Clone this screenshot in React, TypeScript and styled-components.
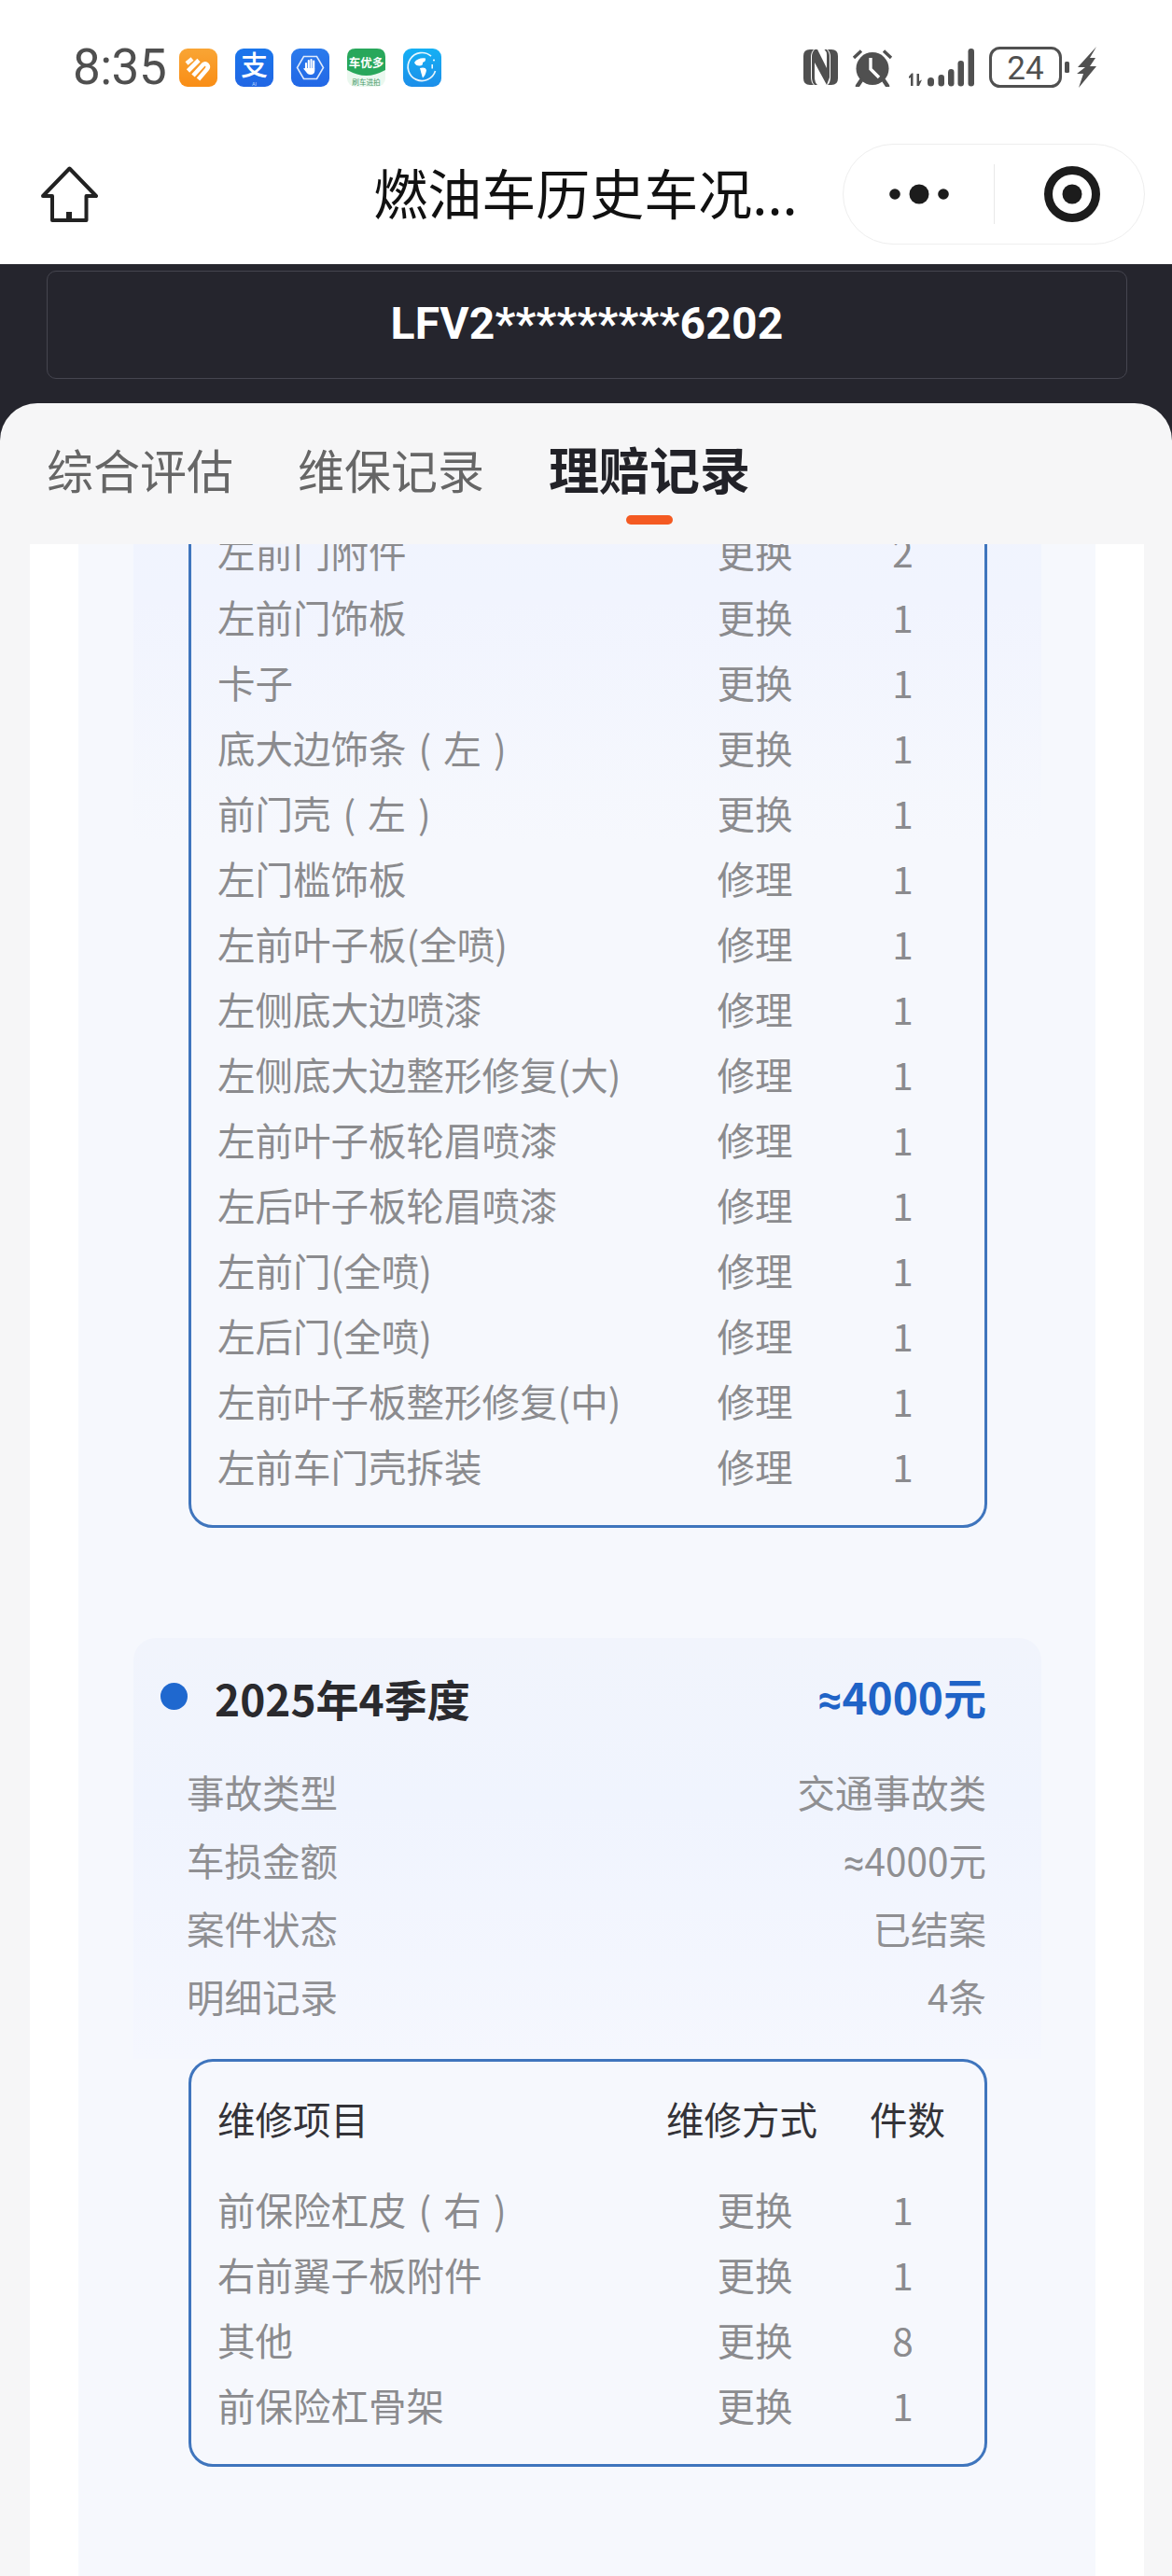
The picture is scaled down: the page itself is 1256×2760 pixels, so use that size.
import React from "react";
import styled, { createGlobalStyle } from "styled-components";

const Global = createGlobalStyle`
  html, body { margin: 0; padding: 0; background: #fff; }
  * { box-sizing: border-box; }
`;

const CJK = `"Noto Sans CJK SC", "Noto Sans", sans-serif`;

const Page = styled.div`
  width: 1256px;
  height: 2760px;
  overflow: hidden;
  background: #fff;
  display: flex;
  flex-direction: column;
  font-family: ${CJK};
`;

const StatusBar = styled.div`
  height: 140px;
  flex: none;
  padding: 50px 81px 0 78px;
  display: flex;
  justify-content: space-between;
  align-items: flex-start;
`;
const StatusLeft = styled.div`
  display: flex;
  align-items: center;
  height: 44px;
`;
const Time = styled.span`
  font-family: Roboto, sans-serif;
  font-size: 53px;
  line-height: 44px;
  letter-spacing: -0.5px;
  color: #4f4f4f;
  width: 114px;
`;
const AppIcons = styled.div`
  display: flex;
  gap: 19px;
`;
const StatusRight = styled.div`
  display: flex;
  align-items: center;
  height: 44px;
  gap: 15px;
`;

const NavBar = styled.div`
  height: 143px;
  flex: none;
  display: grid;
  grid-template-columns: 1fr auto 1fr;
  align-items: center;
  padding: 0 29px 8px 44px;
`;
const Title = styled.h1`
  margin: 0 16px 0 0;
  padding-bottom: 6px;
  font-size: 58px;
  font-weight: 400;
  line-height: 70px;
  color: #111;
  white-space: nowrap;
`;
const Capsule = styled.div`
  justify-self: end;
  width: 324px;
  height: 108px;
  border: 1.5px solid #eeeeee;
  border-radius: 54px;
  background: #fff;
  display: grid;
  grid-template-columns: 161px 1px 1fr;
  align-items: center;
  justify-items: center;
`;
const CapsuleDivider = styled.div`
  width: 1.5px;
  height: 64px;
  background: #e8e8e8;
`;
const TargetWrap = styled.div`
  display: flex;
  margin-left: 5px;
`;

const Hero = styled.div`
  flex: none;
  height: 149px;
  padding: 7px 48px 26px 50px;
  background: #25252d;
`;
const VinBox = styled.div`
  height: 116px;
  padding-bottom: 3px;
  border: 1.5px solid #45454f;
  border-radius: 10px;
  display: flex;
  align-items: center;
  justify-content: center;
  color: #fff;
  font-family: Roboto, sans-serif;
  font-weight: 700;
  font-size: 48px;
  letter-spacing: 0.2px;
`;

const HeroBackdrop = styled.div`
  flex: 1;
  min-height: 0;
  background: #25252d;
  display: flex;
  flex-direction: column;
`;
const Sheet = styled.div`
  flex: 1;
  min-height: 0;
  background: #f6f6f7;
  border-radius: 40px 40px 0 0;
  display: flex;
  flex-direction: column;
`;
const Tabs = styled.div`
  flex: none;
  height: 151px;
  padding: 40px 0 0 50px;
  display: flex;
  gap: 69px;
`;
const Tab = styled.div<{ $active?: boolean }>`
  display: flex;
  flex-direction: column;
  align-items: center;
  font-size: ${(p) => (p.$active ? 54 : 50)}px;
  font-weight: ${(p) => (p.$active ? 700 : 400)};
  line-height: 60px;
  color: ${(p) => (p.$active ? "#222228" : "#666")};
`;
const TabBar = styled.div`
  width: 50px;
  height: 10px;
  margin-top: 20px;
  border-radius: 5px;
  background: #f45a22;
`;

const Viewport = styled.div`
  flex: 1;
  min-height: 0;
  overflow: hidden;
  padding: 0 30px 0 32px;
  display: flex;
`;
const WhiteCard = styled.div`
  flex: 1;
  min-width: 0;
  background: #fff;
  padding: 0 52px;
  display: flex;
`;
const PaleCard = styled.div`
  flex: 1;
  min-width: 0;
  background: #f6f8fd;
  padding: 0 58px 0 59px;
`;
const ScrollContent = styled.div`
  margin-top: -59px;
`;
const Section = styled.section<{ $fade?: boolean }>`
  background: ${(p) =>
    p.$fade ? "linear-gradient(#f0f4fe 0, #f1f4fe 120px, #f6f8fd 380px)" : "transparent"};
  & + & {
    margin-top: 118px;
  }
`;
const Summary = styled.div`
  height: 451px;
  padding: 38px 59px 0 57px;
  border-radius: 24px 24px 0 0;
  background: linear-gradient(#f1f4fc 0, #f0f4fe 40%, #f5f7fe 100%);
`;
const SummaryHead = styled.div`
  height: 58px;
  padding-bottom: 6px;
  margin: 0 0 35px -28px;
  display: flex;
  align-items: center;
`;
const Dot = styled.span`
  width: 29px;
  height: 29px;
  margin: 0 29px 4px 0;
  border-radius: 50%;
  background: #1f68cf;
  flex: none;
`;
const Quarter = styled.h2`
  margin: 0;
  flex: 1;
  font-size: 46px;
  font-weight: 700;
  line-height: 58px;
  color: #2a2a2e;
`;
const Amount = styled.span`
  font-size: 46px;
  font-weight: 700;
  line-height: 58px;
  color: #1f63c7;
`;
const Approx = styled.span`
  font-family: Roboto, sans-serif;
`;
const InfoRow = styled.div`
  height: 73px;
  padding-bottom: 6px;
  display: flex;
  justify-content: space-between;
  align-items: center;
  font-size: 40.5px;
  color: #8f8f92;
`;

const Table = styled.div`
  margin: 0 58px 0 59px;
  padding: 31px 42px 26px 28px;
  border: 3px solid #3f75bd;
  border-radius: 26px;
`;
const Row = styled.div<{ $head?: boolean }>`
  height: ${(p) => (p.$head ? 60 : 70)}px;
  padding-bottom: 6px;
  margin-bottom: ${(p) => (p.$head ? 34 : 0)}px;
  display: grid;
  grid-template-columns: minmax(0, 1fr) 162px 81px;
  column-gap: 56px;
  align-items: center;
  font-size: 40.5px;
  white-space: nowrap;
  color: ${(p) => (p.$head ? "#333338" : "#8b8b8e")};
`;
const ItemName = styled.span`
  word-spacing: 4px;
`;
const Method = styled.span<{ $head?: boolean }>`
  text-align: center;
  padding-left: ${(p) => (p.$head ? 0 : 28)}px;
`;
const Count = styled.span<{ $head?: boolean }>`
  text-align: center;
  padding-right: ${(p) => (p.$head ? 0 : 10)}px;
`;

/* Icons */
const HomeIcon = () => (
  <svg width="61" height="60" viewBox="0 0 61 60" fill="none" stroke="#222" strokeWidth="4" strokeLinejoin="round">
    <path d="M30.5 2.5 L59 32 H48.5 V58 H12 V32 H2 Z" />
    <path d="M30 58 V49" strokeWidth="6" />
  </svg>
);
const HeartApp = () => (
  <svg width="41" height="41" viewBox="0 0 41 41">
    <defs>
      <linearGradient id="or" x1="0" y1="0" x2="0" y2="1">
        <stop offset="0" stopColor="#f9a535" />
        <stop offset="1" stopColor="#f98d15" />
      </linearGradient>
    </defs>
    <rect width="41" height="41" rx="9" fill="url(#or)" />
    <g fill="none" stroke="#fff" strokeWidth="4.6" strokeLinecap="butt">
      <path d="M8 16 L14 11" opacity=".95" />
      <path d="M9.5 24 L21 12.5" />
      <path d="M15 29 L25.5 17.5 Q28 15 30 17.5 Q32 20 29.5 22.5 L20.5 33" />
    </g>
  </svg>
);
const AlipayApp = () => (
  <svg width="41" height="41" viewBox="0 0 41 41">
    <defs>
      <linearGradient id="bl" x1="0" y1="0" x2="0" y2="1">
        <stop offset="0" stopColor="#1a76ec" />
        <stop offset="1" stopColor="#2166e4" />
      </linearGradient>
    </defs>
    <rect width="41" height="41" rx="9" fill="url(#bl)" />
    <text x="20.5" y="29" textAnchor="middle" fontSize="29" fontWeight="500" fill="#fff" fontFamily={CJK}>支</text>
    <text x="20.5" y="39.5" textAnchor="middle" fontSize="5.5" fill="#bcd8ff" fontFamily="Roboto, sans-serif">AI</text>
  </svg>
);
const HandApp = () => (
  <svg width="41" height="41" viewBox="0 0 41 41">
    <defs>
      <linearGradient id="hb" x1="0" y1="0" x2="0" y2="1">
        <stop offset="0" stopColor="#2b7bec" />
        <stop offset="1" stopColor="#2267e6" />
      </linearGradient>
    </defs>
    <rect width="41" height="41" rx="9" fill="url(#hb)" />
    <path d="M13.5 8.5 H27.5 L34.5 20.5 L27.5 32.5 H13.5 L6.5 20.5 Z" fill="none" stroke="#fff" strokeWidth="1.6" opacity=".85" />
    <path d="M16 16 V22 M18.8 13 V21 M21.5 12 V21 M24.2 13.5 V21" stroke="#fff" strokeWidth="2.1" strokeLinecap="round" />
    <path d="M14.9 21 H25.3 V24 Q25 28 20.8 28 Q17.6 28 16 25 L13 21.5 Z" fill="#fff" />
  </svg>
);
const CarApp = () => (
  <svg width="41" height="41" viewBox="0 0 41 41">
    <rect width="41" height="41" rx="9" fill="#eaf8ef" />
    <path d="M9 0 H32 Q41 0 41 9 V23 Q30 29 20.5 29 Q11 29 0 23 V9 Q0 0 9 0 Z" fill="#28a75b" />
    <text x="20.5" y="20" textAnchor="middle" fontSize="12.5" fontWeight="700" fill="#fff" fontFamily={CJK}>车优多</text>
    <text x="20.5" y="39" textAnchor="middle" fontSize="7.6" fill="#4b9a6a" fontFamily={CJK}>刷车进拍</text>
  </svg>
);
const GlobeApp = () => (
  <svg width="41" height="41" viewBox="0 0 41 41">
    <defs>
      <linearGradient id="gb" x1="0" y1="0" x2="0" y2="1">
        <stop offset="0" stopColor="#15b0f4" />
        <stop offset="1" stopColor="#1c8ee9" />
      </linearGradient>
    </defs>
    <rect width="41" height="41" rx="9" fill="url(#gb)" />
    <path d="M30 8.2 A15 15 0 1 0 34.5 24" fill="none" stroke="#fff" strokeWidth="1.7" opacity=".9" />
    <path d="M12 15 Q16 9.5 24 10.5 Q24.5 14 21 15 Q21.5 18.5 17.5 18.5 Q13.5 18.5 12 15 Z" fill="#fff" />
    <path d="M18 21 Q24 19.5 25 23 Q24.5 28 21 31.5 Q19.5 27 18 21 Z" fill="#fff" />
    <path d="M31.2 17 V21.5" stroke="#fff" strokeWidth="1.5" />
    <circle cx="33" cy="12.5" r="1" fill="#fff" />
  </svg>
);
const gray = "#505050";
const NfcIcon = () => (
  <svg width="37" height="38" viewBox="0 0 37 38">
    <path d="M7 0 H11 Q8 3 8 8 V30 Q8 35 11 38 H7 Q0 38 0 31 V7 Q0 0 7 0 Z" fill={gray} />
    <path d="M26 0 H30 Q37 0 37 7 V31 Q37 38 30 38 H26 Q29 35 29 30 V8 Q29 3 26 0 Z" fill={gray} />
    <path d="M12 0 H15 L25 20 V6 Q25 2 22.5 0 H25 Q28 3 28 8 V30 L25 38 L12 14 V30 Q12 35 15 38 H12 Q9 35 9 30 V8 Q9 3 12 0 Z" fill={gray} />
  </svg>
);
const AlarmIcon = () => (
  <svg width="44" height="42" viewBox="0 0 44 42">
    <circle cx="22" cy="22.5" r="17.5" fill={gray} />
    <path d="M2 11 L10 3.5 M42 11 L34 3.5" stroke={gray} strokeWidth="3.4" />
    <path d="M10 35 L6 41 M34 35 L38 41" stroke={gray} strokeWidth="4.4" strokeLinecap="round" />
    <path d="M20 11 V23 L29 32" fill="none" stroke="#fff" strokeWidth="3.4" />
  </svg>
);
const SignalIcon = () => (
  <svg width="73" height="44" viewBox="0 0 73 44">
    <g fill={gray}>
      <path d="M5 28.5 L2 32 V34 L4 33 V42 H6.5 V28.5 Z" />
      <path d="M10.5 29 H13 V37 L16 35.5 L13 42 H10.5 Z" />
      <rect x="22" y="33" width="7" height="9.5" rx="3.5" />
      <rect x="33.5" y="30" width="6.5" height="12.5" rx="3.2" />
      <rect x="44" y="24" width="6.5" height="18.5" rx="3.2" />
      <rect x="54.5" y="15" width="6.5" height="27.5" rx="3.2" />
      <rect x="65.5" y="2" width="6.5" height="40.5" rx="3.2" />
    </g>
  </svg>
);
const BatteryIcon = () => (
  <svg width="115" height="44" viewBox="0 0 115 44">
    <rect x="1.5" y="1.5" width="75" height="41" rx="10" fill="none" stroke={gray} strokeWidth="3" />
    <text x="39" y="35" textAnchor="middle" fontFamily="Roboto, sans-serif" fontSize="35" fill={gray}>24</text>
    <rect x="81" y="16" width="5" height="12" rx="1.5" fill={gray} />
    <path d="M115 0 L95 22 H103 L94 29 H101 L96 44 L115 21 H108 L114 12 H108 Z" fill={gray} />
  </svg>
);
const DotsIcon = () => (
  <svg width="64" height="24" viewBox="0 0 64 24" fill="#1c1c1c">
    <circle cx="6" cy="12" r="5.8" />
    <circle cx="32" cy="12" r="10.5" />
    <circle cx="58" cy="12" r="5.8" />
  </svg>
);
const TargetIcon = () => (
  <svg width="62" height="62" viewBox="0 0 62 62">
    <circle cx="31" cy="31" r="25.5" fill="none" stroke="#1c1c1c" strokeWidth="9" />
    <circle cx="31" cy="31" r="10.5" fill="#1c1c1c" />
  </svg>
);

type Item = [string, string, string];
const first: Item[] = [
  ["左前门附件", "更换", "2"],
  ["左前门饰板", "更换", "1"],
  ["卡子", "更换", "1"],
  ["底大边饰条 ( 左 )", "更换", "1"],
  ["前门壳 ( 左 )", "更换", "1"],
  ["左门槛饰板", "修理", "1"],
  ["左前叶子板(全喷)", "修理", "1"],
  ["左侧底大边喷漆", "修理", "1"],
  ["左侧底大边整形修复(大)", "修理", "1"],
  ["左前叶子板轮眉喷漆", "修理", "1"],
  ["左后叶子板轮眉喷漆", "修理", "1"],
  ["左前门(全喷)", "修理", "1"],
  ["左后门(全喷)", "修理", "1"],
  ["左前叶子板整形修复(中)", "修理", "1"],
  ["左前车门壳拆装", "修理", "1"],
];
const second: Item[] = [
  ["前保险杠皮 ( 右 )", "更换", "1"],
  ["右前翼子板附件", "更换", "1"],
  ["其他", "更换", "8"],
  ["前保险杠骨架", "更换", "1"],
];
const info: [string, React.ReactNode][] = [
  ["事故类型", "交通事故类"],
  ["车损金额", <><Approx>≈</Approx>4000元</>],
  ["案件状态", "已结案"],
  ["明细记录", "4条"],
];

const RepairTable = ({ items, head }: { items: Item[]; head?: boolean }) => (
  <Table>
    {head && (
      <Row $head>
        <span>维修项目</span>
        <Method $head>维修方式</Method>
        <Count $head>件数</Count>
      </Row>
    )}
    {items.map((it, i) => (
      <Row key={i}>
        <ItemName>{it[0]}</ItemName>
        <Method>{it[1]}</Method>
        <Count>{it[2]}</Count>
      </Row>
    ))}
  </Table>
);

export default function App() {
  return (
    <Page>
      <Global />
      <StatusBar>
        <StatusLeft>
          <Time>8:35</Time>
          <AppIcons>
            <HeartApp />
            <AlipayApp />
            <HandApp />
            <CarApp />
            <GlobeApp />
          </AppIcons>
        </StatusLeft>
        <StatusRight>
          <NfcIcon />
          <AlarmIcon />
          <SignalIcon />
          <BatteryIcon />
        </StatusRight>
      </StatusBar>
      <NavBar>
        <HomeIcon />
        <Title>燃油车历史车况...</Title>
        <Capsule>
          <DotsIcon />
          <CapsuleDivider />
          <TargetWrap>
            <TargetIcon />
          </TargetWrap>
        </Capsule>
      </NavBar>
      <Hero>
        <VinBox>LFV2*********6202</VinBox>
      </Hero>
      <HeroBackdrop>
        <Sheet>
          <Tabs>
            <Tab>综合评估</Tab>
            <Tab>维保记录</Tab>
            <Tab $active>
              理赔记录
              <TabBar />
            </Tab>
          </Tabs>
          <Viewport>
            <WhiteCard>
              <PaleCard>
                <ScrollContent>
                  <Section $fade>
                    <RepairTable items={first} />
                  </Section>
                  <Section>
                    <Summary>
                      <SummaryHead>
                        <Dot />
                        <Quarter>2025年4季度</Quarter>
                        <Amount><Approx>≈</Approx>4000元</Amount>
                      </SummaryHead>
                      {info.map(([k, v]) => (
                        <InfoRow key={k}>
                          <span>{k}</span>
                          <span>{v}</span>
                        </InfoRow>
                      ))}
                    </Summary>
                    <RepairTable items={second} head />
                  </Section>
                </ScrollContent>
              </PaleCard>
            </WhiteCard>
          </Viewport>
        </Sheet>
      </HeroBackdrop>
    </Page>
  );
}
